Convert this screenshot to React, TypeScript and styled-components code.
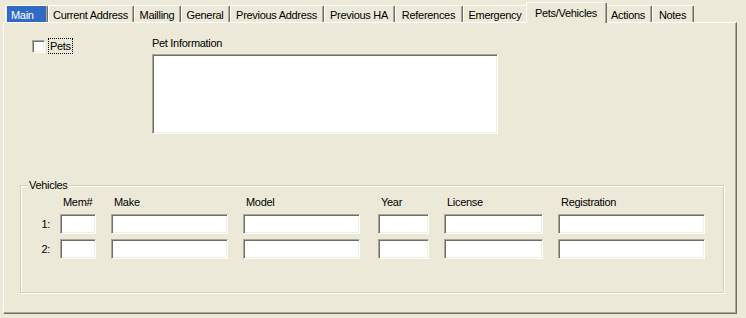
import React from "react";
import styled, { createGlobalStyle, css } from "styled-components";

//  palette
const FACE = "#ece9d8";
const SHADOW = "#aca899";
const DARK = "#716f64";
const LIGHT = "#f1efe2";
const ETCH = "#d0d0bf";

const GlobalStyle = createGlobalStyle`
  html, body {
    margin: 0;
    padding: 0;
    background: ${FACE};
  }
  body {
    font-family: "Liberation Sans", Arial, sans-serif;
    font-size: 11px;
    color: #000;
  }
`;

const sunken = css`
  box-sizing: border-box;
  margin: 0;
  padding: 0;
  background: #fff;
  border-style: solid;
  border-width: 1px;
  border-color: ${SHADOW} #fff #fff ${SHADOW};
  box-shadow: inset 1px 1px ${DARK}, inset -1px -1px ${LIGHT};
  outline: none;
`;

const Window = styled.div`
  width: 746px;
  height: 318px;
  box-sizing: border-box;
  padding-left: 3px;
  letter-spacing: -0.3px;
  line-height: 13px;
  overflow: hidden;
`;

//  tabs
const TabStrip = styled.div`
  display: flex;
  align-items: flex-end;
  height: 22px;
  padding-left: 2px;
  position: relative;
  z-index: 1;
`;

interface TabProps {
  $w: number;
  $active?: boolean;
}
const Tab = styled.div<TabProps>(({ $w, $active }) => ({
  boxSizing: "border-box",
  display: "flex",
  flexShrink: 0,
  width: $active ? $w + 4 : $w,
  height: $active ? 21 : 17,
  margin: $active ? "0 -2px -1px" : 0,
  position: "relative",
  zIndex: $active ? 2 : 1,
  background: FACE,
  borderTop: "1px solid #fff",
  borderLeft: "1px solid #fff",
  borderRight: `1px solid ${DARK}`,
  borderRadius: "2px 2px 0 0",
  boxShadow: `inset -1px 0 ${SHADOW}`,
  whiteSpace: "nowrap"
}));

const TabLabel = styled.div<{ $focus?: boolean; $active?: boolean }>`
  flex: 1;
  padding-top: ${p => (p.$active ? 4 : 3)}px;
  text-align: ${p => (p.$focus ? "left" : "center")};
  padding-left: ${p => (p.$focus ? 4 : 0)}px;
  margin-left: ${p => (p.$focus ? 1 : 0)}px;
  margin-right: 1px;
  background: ${p => (p.$focus ? "#316ac5" : "transparent")};
  color: ${p => (p.$focus ? "#fff" : "#000")};
`;

const Panel = styled.div`
  box-sizing: border-box;
  width: 734px;
  height: 292px;
  border-top: 1px solid #fff;
  border-left: 1px solid #fff;
  border-right: 1px solid ${DARK};
  border-bottom: 1px solid ${DARK};
  box-shadow: inset -1px -1px ${SHADOW};
`;

//  pets
const TopSection = styled.div`
  display: flex;
  padding: 12px 0 0 28px;
`;

const PetsColumn = styled.div`
  width: 120px;
  padding-top: 3px;
`;

const CheckRow = styled.label`
  display: flex;
  align-items: center;
  gap: 3px;
`;

const CheckBox = styled.span`
  ${sunken};
  display: block;
  width: 13px;
  height: 13px;
`;

const FocusLabel = styled.span`
  border: 1px dotted #000;
  padding: 1px 1px 0;
`;

const PetInfo = styled.div`
  display: flex;
  flex-direction: column;
  gap: 4px;
`;

const Caption = styled.div`
  height: 13px;
  padding-top: 2px;
`;

const TextArea = styled.textarea`
  ${sunken};
  display: block;
  width: 346px;
  height: 80px;
  resize: none;
`;

//  vehicles
const GroupBox = styled.div`
  position: relative;
  box-sizing: border-box;
  width: 704px;
  margin: 51px 0 0 16px;
  padding: 10px 0 33px;
  border: 1px solid ${ETCH};
  box-shadow: inset 1px 1px #fff, 1px 1px #fff;
  display: flex;
  flex-direction: column;
  gap: 5px;
`;

const Legend = styled.span`
  position: absolute;
  top: -7px;
  left: 7px;
  padding: 0 1px;
  background: ${FACE};
`;

const Row = styled.div<{ $header?: boolean }>`
  display: flex;
  align-items: center;
  height: ${p => (p.$header ? 13 : 20)}px;
`;

const RowLabel = styled.div`
  width: 29px;
  padding-top: 1px;
  text-align: right;
`;

const Cell = styled.div<{ $w: number; $gap: number }>`
  width: ${p => p.$w}px;
  margin-left: ${p => p.$gap}px;
`;

const HeaderText = styled.span`
  padding-left: 3px;
`;

const Field = styled.input`
  ${sunken};
  display: block;
  width: 100%;
  height: 20px;
`;

const tabs = [
  { label: "Main", w: 43 },
  { label: "Current Address", w: 86 },
  { label: "Mailling", w: 47 },
  { label: "General", w: 49 },
  { label: "Previous Address", w: 94 },
  { label: "Previous HA", w: 71 },
  { label: "References", w: 68 },
  { label: "Emergency", w: 65 },
  { label: "Pets/Vehicles", w: 77 },
  { label: "Actions", w: 47 },
  { label: "Notes", w: 42 }
];

const columns = [
  { label: "Mem#", w: 36, gap: 10 },
  { label: "Make", w: 117, gap: 15 },
  { label: "Model", w: 117, gap: 15 },
  { label: "Year", w: 51, gap: 18 },
  { label: "License", w: 99, gap: 15 },
  { label: "Registration", w: 147, gap: 15 }
];

export default function App() {
  const active = "Pets/Vehicles";
  const focused = "Main";

  return (
    <>
      <GlobalStyle />
      <Window>
        <TabStrip>
          {tabs.map(t => (
            <Tab key={t.label} $w={t.w} $active={t.label === active}>
              <TabLabel
                $focus={t.label === focused}
                $active={t.label === active}
              >
                {t.label}
              </TabLabel>
            </Tab>
          ))}
        </TabStrip>
        <Panel>
          <TopSection>
            <PetsColumn>
              <CheckRow>
                <CheckBox />
                <FocusLabel>Pets</FocusLabel>
              </CheckRow>
            </PetsColumn>
            <PetInfo>
              <Caption>Pet Information</Caption>
              <TextArea />
            </PetInfo>
          </TopSection>
          <GroupBox>
            <Legend>Vehicles</Legend>
            <Row $header>
              <RowLabel />
              {columns.map(c => (
                <Cell key={c.label} $w={c.w} $gap={c.gap}>
                  <HeaderText>{c.label}</HeaderText>
                </Cell>
              ))}
            </Row>
            {[1, 2].map(n => (
              <Row key={n}>
                <RowLabel>{n}:</RowLabel>
                {columns.map(c => (
                  <Cell key={c.label} $w={c.w} $gap={c.gap}>
                    <Field />
                  </Cell>
                ))}
              </Row>
            ))}
          </GroupBox>
        </Panel>
      </Window>
    </>
  );
}
